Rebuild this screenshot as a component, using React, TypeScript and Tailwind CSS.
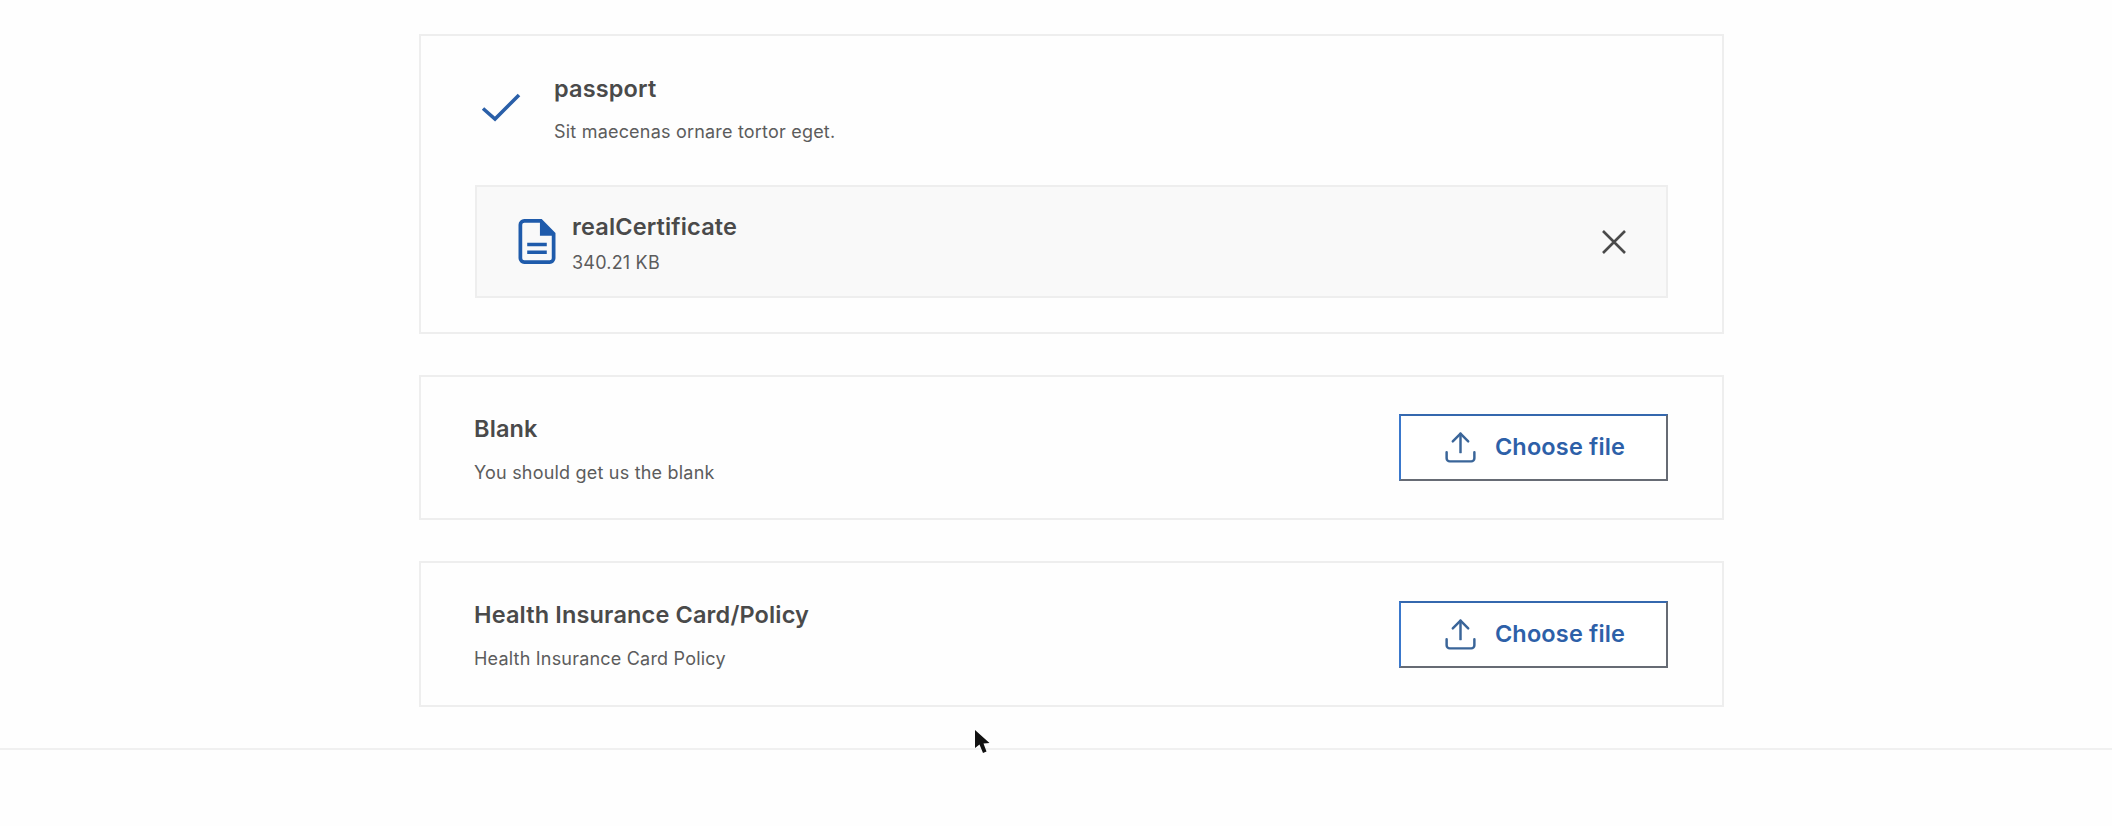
import React from 'react';
import { Upload } from 'lucide-react';

const font = { fontFamily: 'Inter, "Liberation Sans", sans-serif' };

const CheckIcon = () => (
  <svg width="40" height="30" viewBox="0 0 40 30" fill="none" className="shrink-0">
    <path d="M2 16.5 L14 27 L38 3" stroke="#2a5fa8" strokeWidth="3.6" />
  </svg>
);

const FileIcon = () => (
  <svg width="38" height="45" viewBox="0 0 38 46" fill="none" className="shrink-0">
    <path d="M6 2 H23 L36 15 V40 A4 4 0 0 1 32 44 H6 A4 4 0 0 1 2 40 V6 A4 4 0 0 1 6 2 Z" stroke="#1f5bab" strokeWidth="3.8" />
    <path d="M22 2 L36 15 V17 H22 Z" fill="#1f5bab" />
    <path d="M9 26 H29 M9 34 H29" stroke="#1f5bab" strokeWidth="3.6" />
  </svg>
);

const CloseIcon = () => (
  <svg width="26" height="26" viewBox="0 0 26 26" fill="none">
    <path d="M2 2 L24 24 M24 2 L2 24" stroke="#4a4a4a" strokeWidth="2.6" />
  </svg>
);

const Cursor = () => (
  <svg width="18" height="26" viewBox="0 0 18 26" className="absolute left-[974px] top-[729px] blur-[0.6px]">
    <path d="M1 1 L1 19 L5.5 15.5 L9 24 L12.5 22.5 L9.5 14.5 L15.5 14 Z" fill="#111" />
  </svg>
);

const ChooseFile = () => (
  <button className="w-[269px] h-[67px] shrink-0 flex items-center justify-center gap-[16px] bg-white border-2 border-t-[#3568ae] border-l-[#3a78cc] border-r-[#666b74] border-b-[#666b74] text-[#2d60a8]">
    <Upload size={37} strokeWidth={1.6} color="#3a6599" />
    <span className="text-[23.5px] leading-7 tracking-[0.15px] font-semibold -mt-[1px]">Choose file</span>
  </button>
);

type RowProps = { title: string; desc: string; tall?: boolean };

const UploadCard = ({ title, desc, tall }: RowProps) => (
  <div className={`${tall ? 'h-[146px]' : 'h-[145px]'} flex items-center justify-between border-2 border-[#eeeeee] pl-[53px] pr-[54px]`}>
    <div className="pt-[4px]">
      <div className="text-[23.5px] leading-7 tracking-[0.15px] font-semibold text-[#4a4a4a]">{title}</div>
      <div className="mt-[18px] text-[18px] leading-6 tracking-[0.2px] text-[#5c5c5c]">{desc}</div>
    </div>
    <ChooseFile />
  </div>
);

export default function App() {
  return (
    <div className="relative h-[826px] overflow-hidden bg-[#fefefe]" style={font}>
      <div className="ml-[419px] w-[1305px] pt-[34px] flex flex-col gap-[41px]">
        <div className="border-2 border-[#eeeeee] pl-[54px] pr-[54px] pt-[39px] pb-[35px] h-[300px]">
          <div className="flex items-start">
            <div className="w-[79px] pl-[6px] pt-[17px]">
              <CheckIcon />
            </div>
            <div>
              <div className="text-[23.5px] leading-7 tracking-[0.15px] font-semibold text-[#4a4a4a]">passport</div>
              <div className="mt-[17px] text-[18px] leading-6 tracking-[0.2px] text-[#5c5c5c]">Sit maecenas ornare tortor eget.</div>
            </div>
          </div>
          <div className="mt-[41px] h-[113px] flex items-center justify-between bg-[#f9f9f9] border-2 border-[#eeeeee] pl-[41px] pr-[39px]">
            <div className="flex items-center gap-[16px]">
              <FileIcon />
              <div className="pt-[4px]">
                <div className="text-[23.5px] leading-7 tracking-[0.15px] font-semibold text-[#4a4a4a]">realCertificate</div>
                <div className="mt-[10px] text-[18px] leading-6 tracking-[0.2px] text-[#5c5c5c]">340.21 KB</div>
              </div>
            </div>
            <CloseIcon />
          </div>
        </div>
        <UploadCard title="Blank" desc="You should get us the blank" />
        <UploadCard title="Health Insurance Card/Policy" desc="Health Insurance Card Policy" tall />
      </div>
      <div className="mt-[41px] border-t-2 border-[#f0f0f0]" />
      <Cursor />
    </div>
  );
}
